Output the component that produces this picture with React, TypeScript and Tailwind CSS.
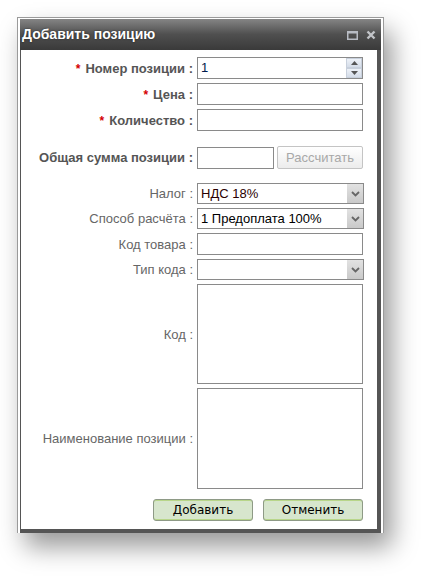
import React from "react";

const font = { fontFamily: '"Liberation Sans", Arial, sans-serif' };

function Label({ text, required, bold }: { text: string; required?: boolean; bold?: boolean }) {
  return (
    <div
      className={`w-[176px] shrink-0 pr-[4px] text-right text-[13px] leading-none ${
        bold ? "font-bold text-[#555]" : "text-[#666]"
      }`}
    >
      {required && <span className="mr-[5px] text-[12px] text-[#d40000]">*</span>}
      {text} :
    </div>
  );
}

function TextInput({ w = "w-[166px]" }: { w?: string }) {
  return <div className={`${w} h-[22px] border border-[#8a8a8a] bg-white`} />;
}

function Select({ value, dark }: { value: string; dark?: boolean }) {
  return (
    <div className="flex h-[21px] w-[167px] items-stretch border border-[#8a8a8a] bg-white">
      <div className={`flex-1 pl-[3px] text-[13px] leading-[19px] ${dark ? "text-[#2a0000]" : "text-black"}`}>
        {value}
      </div>
      <div className="flex w-[17px] items-center justify-center border-l border-white bg-gradient-to-b from-[#e2e2e2] to-[#c9c9c9]">
        <svg width="9" height="6" viewBox="0 0 9 6">
          <path d="M1 1 L4.5 4.5 L8 1" fill="none" stroke="#666" strokeWidth="1.8" />
        </svg>
      </div>
    </div>
  );
}

function Row({ children, className = "" }: { children: React.ReactNode; className?: string }) {
  return <div className={`flex items-center ${className}`}>{children}</div>;
}

export default function App() {
  return (
    <div className="h-[581px] w-[433px] bg-white pl-[17px] pt-[17px]" style={font}>
      <div className="w-[367px] border-x border-t border-[#9a9a9a] pl-[2px] pr-[3px] pt-[1px] shadow-[8px_14px_24px_rgba(0,0,0,0.4)]">
        {/* title bar */}
        <div className="flex h-[31px] w-[361px] items-center bg-gradient-to-b from-[#858585] via-[#4f4f4f] to-[#3a3a3a] pl-[2px] pr-[5px]">
          <span className="flex-1 text-[14px] font-bold text-white [text-shadow:0_0_2px_rgba(0,0,0,0.6)]">
            Добавить позицию
          </span>
          <svg width="11" height="9" viewBox="0 0 11 9" className="mr-[8px] mt-[2px]">
            <rect x="0.75" y="0.75" width="9.5" height="7.5" fill="none" stroke="#b8bcc4" strokeWidth="1.5" />
            <rect x="0" y="0" width="11" height="2.5" fill="#b8bcc4" />
          </svg>
          <svg width="10" height="10" viewBox="0 0 10 10" className="mt-[1px]">
            <path d="M1.5 1.5 L8.5 8.5 M8.5 1.5 L1.5 8.5" stroke="#c2c4c8" strokeWidth="2.4" />
          </svg>
        </div>

        {/* body */}
        <div className="w-[361px] border-b-4 border-l border-r-4 border-[#555] border-b-double border-r-double bg-white pt-[7px] pb-[8px]">
          <Row>
            <Label text="Номер позиции" required bold />
            <div className="flex h-[22px] w-[166px] border border-[#8a8a8a] bg-white">
              <div className="flex-1 pl-[3px] text-[13px] leading-[20px] text-[#001a4d]">1</div>
              <div className="flex w-[16px] flex-col">
                <div className="flex flex-1 items-center justify-center border border-[#c8d0dc] bg-gradient-to-b from-[#eef2f8] to-[#d4dce8]">
                  <svg width="7" height="4" viewBox="0 0 7 4"><path d="M0 4 L3.5 0 L7 4 Z" fill="#555" /></svg>
                </div>
                <div className="flex flex-1 items-center justify-center border border-[#c8d0dc] bg-gradient-to-b from-[#eef2f8] to-[#d4dce8]">
                  <svg width="7" height="4" viewBox="0 0 7 4"><path d="M0 0 L3.5 4 L7 0 Z" fill="#555" /></svg>
                </div>
              </div>
            </div>
          </Row>
          <Row className="mt-[4px]">
            <Label text="Цена" required bold />
            <TextInput />
          </Row>
          <Row className="mt-[4px]">
            <Label text="Количество" required bold />
            <TextInput />
          </Row>
          <Row className="mt-[15px]">
            <Label text="Общая сумма позиции" bold />
            <TextInput w="w-[77px]" />
            <div className="ml-[3px] flex h-[23px] w-[86px] items-center justify-center rounded-[2px] border border-[#c4c4c4] bg-gradient-to-b from-white to-[#ececec] text-[13px] text-[#a8a8a8]">
              Рассчитать
            </div>
          </Row>
          <Row className="mt-[14px]">
            <Label text="Налог" />
            <Select value="НДС 18%" dark />
          </Row>
          <Row className="mt-[4px]">
            <Label text="Способ расчёта" />
            <Select value="1 Предоплата 100%" />
          </Row>
          <Row className="mt-[4px]">
            <Label text="Код товара" />
            <TextInput />
          </Row>
          <Row className="mt-[4px]">
            <Label text="Тип кода" />
            <Select value="" />
          </Row>
          <Row className="mt-[4px]">
            <Label text="Код" />
            <div className="h-[100px] w-[166px] border border-[#8a8a8a] bg-white" />
          </Row>
          <Row className="mt-[4px]">
            <Label text="Наименование позиции" />
            <div className="h-[101px] w-[166px] border border-[#8a8a8a] bg-white" />
          </Row>
          <div className="mt-[10px] flex justify-end gap-[10px] pr-[14px]">
            {["Добавить", "Отменить"].map((t) => (
              <div
                key={t}
                className="flex h-[22px] w-[100px] items-center justify-center rounded-[3px] border border-[#8e9a86] bg-[#d7e6cd] text-[12px] text-black shadow-[inset_0_1px_0_#b8d68a,inset_0_-1px_0_#b8d68a]"
                style={{ fontFamily: '"DejaVu Sans", Verdana, sans-serif' }}
              >
                {t}
              </div>
            ))}
          </div>
        </div>
      </div>
    </div>
  );
}
